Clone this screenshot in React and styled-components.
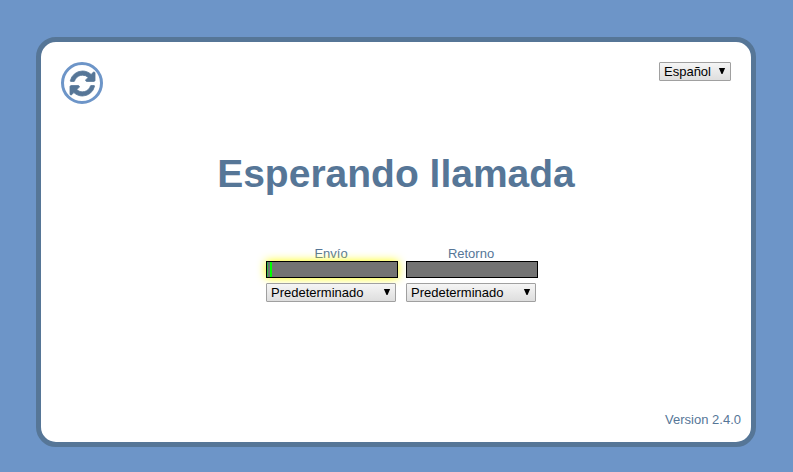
import React from "react";
import styled, { createGlobalStyle } from "styled-components";

const GlobalStyle = createGlobalStyle`
  body {
    margin: 0;
    background: #6d95c8;
    color: #567697;
    font: 13px/15px "Liberation Sans", Arial, sans-serif;
  }
`;

const Page = styled.div`
  box-sizing: border-box;
  height: 472px;
  padding: 37px 37px 25px 36px;
`;

const Panel = styled.main`
  box-sizing: border-box;
  display: flex;
  flex-direction: column;
  height: 410px;
  background: #fff;
  border: 5px solid #567697;
  border-radius: 20px;
`;

const TopBar = styled.header`
  display: flex;
  justify-content: space-between;
  align-items: flex-start;
  padding: 20px 20px 0;
`;

const RefreshButton = styled.button`
  box-sizing: border-box;
  display: flex;
  align-items: center;
  justify-content: center;
  width: 42px;
  height: 42px;
  padding: 1px 0 0 1px;
  border: 3px solid #6d95c8;
  border-radius: 50%;
  background: #fff;
  color: #567697;
`;

const RefreshIcon = styled.svg`
  display: block;
  width: 25px;
  height: 25px;
  overflow: visible;
  fill: currentColor;
  stroke: currentColor;
  stroke-width: 50;
  stroke-linejoin: round;
`;

const Select = styled.button`
  box-sizing: border-box;
  display: flex;
  align-items: center;
  justify-content: space-between;
  width: ${(p) => p.$width}px;
  height: 19px;
  padding: 0 4px;
  border: 1px solid #a0a0a0;
  border-radius: 1px;
  background: linear-gradient(#f5f5f5, #dedede);
  color: #000;
  font: inherit;
`;

const Arrow = styled.svg`
  display: block;
  width: 8px;
  height: 8px;
  margin-bottom: 1px;
  fill: #000;
`;

const Title = styled.h1`
  margin: 47px 0 0;
  font-size: 39px;
  line-height: 45px;
  text-align: center;
`;

const Channels = styled.section`
  display: flex;
  gap: 8px;
  margin: 50px 0 0 225px;
`;

const Channel = styled.div`
  display: flex;
  flex-direction: column;
  width: 132px;
`;

const Label = styled.div`
  width: 130px;
  text-align: center;
`;

const Meter = styled.div`
  box-sizing: border-box;
  display: flex;
  height: 17px;
  margin-bottom: 5px;
  border: 1px solid #000;
  background: #737373;
  box-shadow: ${(p) => (p.$active ? "0 0 10px #ff0" : "none")};
`;

const Level = styled.div`
  width: 1px;
  margin-right: 2px;
  background: #2db34a;
`;

const Peak = styled.div`
  width: 2px;
  background: #0f0;
`;

const Version = styled.footer`
  margin-top: auto;
  padding: 0 10px 15px;
  text-align: right;
`;

function Dropdown({ value, width }) {
  return (
    <Select $width={width}>
      {value}
      <Arrow viewBox="0 0 8 8">
        <path d="M0.9 1h6.2L4.5 6.9h-1z" />
      </Arrow>
    </Select>
  );
}

export default function App() {
  return (
    <>
      <GlobalStyle />
      <Page>
        <Panel>
          <TopBar>
            <RefreshButton aria-label="Actualizar">
              <RefreshIcon viewBox="0 0 1536 1536">
                <path d="M1511 928q0 5-1 7-64 268-268 434.5t-478 166.5q-146 0-282.5-55t-243.5-157l-129 129q-19 19-45 19t-45-19-19-45v-448q0-26 19-45t45-19h448q26 0 45 19t19 45-19 45l-137 137q71 66 161 102t187 36q134 0 250-65t186-179q11-17 53-117 8-23 30-23h192q13 0 22.5 9.5t9.5 22.5zm25-800v448q0 26-19 45t-45 19h-448q-26 0-45-19t-19-45 19-45l138-138q-148-137-349-137-134 0-250 65t-186 179q-11 17-53 117-8 23-30 23h-199q-13 0-22.5-9.5t-9.5-22.5v-7q65-268 270-434.5t480-166.5q146 0 284 55.5t245 156.5l130-129q19-19 45-19t45 19 19 45z" />
              </RefreshIcon>
            </RefreshButton>
            <Dropdown value="Español" width={72} />
          </TopBar>
          <Title>Esperando llamada</Title>
          <Channels>
            <Channel>
              <Label>Envío</Label>
              <Meter $active>
                <Level />
                <Peak />
              </Meter>
              <Dropdown value="Predeterminado" width={130} />
            </Channel>
            <Channel>
              <Label>Retorno</Label>
              <Meter />
              <Dropdown value="Predeterminado" width={130} />
            </Channel>
          </Channels>
          <Version>Version 2.4.0</Version>
        </Panel>
      </Page>
    </>
  );
}
